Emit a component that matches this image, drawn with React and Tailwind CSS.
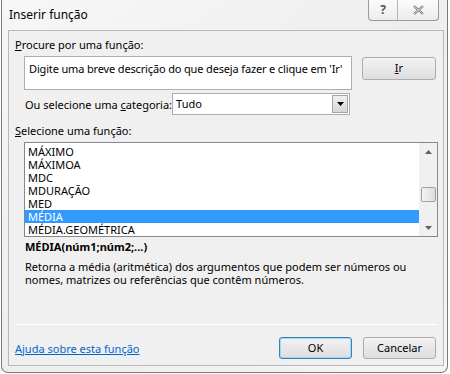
import React from "react";

const funcs = ["MÁXIMO", "MÁXIMOA", "MDC", "MDURAÇÃO", "MED", "MÉDIA", "MÉDIA.GEOMÉTRICA"];

const Btn = ({ children, primary, className = "" }) => (
    <div
        className={
            "flex items-center justify-center rounded-[3px] border bg-gradient-to-b from-[#f2f2f2] to-[#dedede] text-black " +
            (primary ? "border-[#3c7fb1] shadow-[inset_0_0_0_1px_#9fd5f5] " : "border-[#acacac] ") +
            className
        }
    >
        {children}
    </div>
);

const App = () => {
    return (
        <div
            className="w-[450px] h-[374px] bg-white overflow-hidden"
            style={{ fontFamily: "'Noto Sans', 'Open Sans', sans-serif" }}
        >
            <div className="ml-[1px] w-[447px] h-[373px] border border-t-0 border-[#7a7a7a] rounded-b-[7px] bg-gradient-to-br from-[#f7f7f7] via-[#eeeeee] to-[#f5f5f5]">
                {/* title bar */}
                <div className="flex justify-between h-[30px]">
                    <div className="pl-[7px] pt-[6px] text-[12px] text-black">Inserir função</div>
                    <div className="flex mr-[8px] h-[21px] border border-t-0 border-[#9a9a9a] rounded-b-[4px] bg-gradient-to-b from-[#fbfbfb] to-[#ececec]">
                        <div className="w-[29px] flex items-center justify-center border-r border-[#b5b5b5] text-[12px] font-bold text-[#555]">?</div>
                        <div className="w-[40px] flex items-center justify-center">
                            <svg width="11" height="10" viewBox="0 0 11 10">
                                <path d="M1 1 L10 9 M10 1 L1 9" stroke="#6a6a6a" strokeWidth="2.2" fill="none" />
                                <path d="M1 1 L10 9 M10 1 L1 9" stroke="#fff" strokeWidth="0.8" fill="none" />
                            </svg>
                        </div>
                    </div>
                </div>

                {/* client area */}
                <div className="ml-[6px] w-[436px] h-[336px] border border-[#b9b9b9] bg-[#f0f0f0] text-[11px] text-black whitespace-nowrap">
                    <div className="pl-[6px] pt-[6px] leading-[15px]">
                        <span className="underline">P</span>rocure por uma função:
                    </div>
                    <div className="flex mt-[4px] ml-[15px]">
                        <div className="w-[328px] h-[34px] border border-[#abadb3] bg-white pl-[4px] pt-[4px] leading-[15px] tracking-[-0.15px] overflow-hidden">
                            Digite uma breve descrição do que deseja fazer e clique em 'Ir'
                        </div>
                        <Btn className="ml-[10px] mt-[1px] w-[74px] h-[23px]">
                            <span className="underline">I</span>r
                        </Btn>
                    </div>
                    <div className="flex items-center mt-[3px] ml-[16px]">
                        <span className="leading-[15px]">
                            Ou selecione uma <span className="underline">c</span>ategoria:
                        </span>
                        <div className="ml-auto mr-[93px] flex w-[179px] h-[22px] border border-[#abadb3] bg-white">
                            <div className="flex-1 pl-[3px] leading-[20px]">Tudo</div>
                            <div className="w-[16px] m-[1px] border border-[#a5a5a5] bg-gradient-to-b from-[#f0f0f0] to-[#d6d6d6] flex items-center justify-center">
                                <svg width="7" height="4" viewBox="0 0 7 4"><path d="M0 0 H7 L3.5 4 Z" fill="#000" /></svg>
                            </div>
                        </div>
                    </div>
                    <div className="pl-[6px] mt-[8px] leading-[15px]">
                        <span className="underline">S</span>elecione uma função:
                    </div>
                    <div className="flex mt-[4px] ml-[15px] w-[414px] h-[95px] border border-[#828790] bg-white">
                        <div className="flex-1 pt-[2px]">
                            {funcs.map((f) => (
                                <div
                                    key={f}
                                    className={
                                        "h-[13px] leading-[13px] pl-[3px] " +
                                        (f === "MÉDIA" ? "bg-[#3399ff] text-white" : "")
                                    }
                                >
                                    {f}
                                </div>
                            ))}
                        </div>
                        <div className="w-[18px] flex flex-col items-center bg-[#f0f0f0]">
                            <div className="h-[17px] flex items-center justify-center">
                                <svg width="7" height="4" viewBox="0 0 7 4"><path d="M0 4 H7 L3.5 0 Z" fill="#606060" /></svg>
                            </div>
                            <div className="mt-[27px] w-[15px] h-[15px] border border-[#a0a0a0] rounded-[2px] bg-gradient-to-r from-[#f4f4f4] to-[#dcdcdc]" />
                            <div className="mt-auto h-[17px] flex items-center justify-center">
                                <svg width="7" height="4" viewBox="0 0 7 4"><path d="M0 0 H7 L3.5 4 Z" fill="#606060" /></svg>
                            </div>
                        </div>
                    </div>
                    <div className="ml-[16px] mt-[2px] font-bold leading-[15px]">MÉDIA(núm1;núm2;...)</div>
                    <div className="ml-[16px] mt-[6px] leading-[13px] w-[400px] whitespace-normal">
                        Retorna a média (aritmética) dos argumentos que podem ser números ou
                        <br />
                        nomes, matrizes ou referências que contêm números.
                    </div>
                    <div className="mx-[6px] mt-[38px] h-[1px] bg-[#dcdcdc] border-b border-white" />
                    <div className="flex items-center mt-[12px] pl-[6px] pr-[7px]">
                        <span className="text-[#0066cc] underline leading-[15px]">Ajuda sobre esta função</span>
                        <Btn primary className="ml-auto w-[73px] h-[22px]">OK</Btn>
                        <Btn className="ml-[11px] w-[73px] h-[22px]">Cancelar</Btn>
                    </div>
                </div>
            </div>
        </div>
    );
};

export default App;
